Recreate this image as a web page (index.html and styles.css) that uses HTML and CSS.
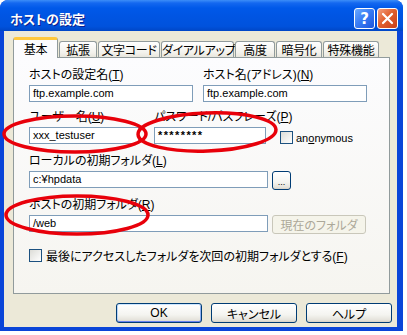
FILE: index.html
```html
<!DOCTYPE html>
<html lang="ja">
<head>
<meta charset="utf-8">
<title>ホストの設定</title>
<link rel="stylesheet" href="styles.css">
</head>
<body>
<div class="window">
  <div class="titlebar">
    <span class="title">ホストの設定</span>
    <div class="tb-buttons">
      <span class="tb-btn help">?</span>
      <span class="tb-btn close"><svg width="13" height="13" viewBox="0 0 13 13"><path d="M2 2 L11 11 M11 2 L2 11" stroke="#fff" stroke-width="2.2" stroke-linecap="round"/></svg></span>
    </div>
  </div>
  <div class="client">
    <div class="tabs">
      <div class="tab active t1">基本</div>
      <div class="tab t2">拡張</div>
      <div class="tab t3">文字コード</div>
      <div class="tab t4">ダイアルアップ</div>
      <div class="tab t5">高度</div>
      <div class="tab t6">暗号化</div>
      <div class="tab t7">特殊機能</div>
    </div>
    <div class="panel">
      <div class="row">
        <div class="field w164">
          <div class="label">ホストの設定名(<u>T</u>)</div>
          <div class="input">ftp.example.com</div>
        </div>
        <div class="field w164">
          <div class="label">ホスト名(アドレス)(<u>N</u>)</div>
          <div class="input">ftp.example.com</div>
        </div>
      </div>
      <div class="row">
        <div class="field w110">
          <div class="label">ユーザー名(<u>U</u>)</div>
          <div class="input">xxx_testuser</div>
        </div>
        <div class="field w112">
          <div class="label">パスワード/パスフレーズ(<u>P</u>)</div>
          <div class="input pw">********</div>
        </div>
        <div class="check-inline">
          <span class="checkbox"></span>
          <span class="latin">an<u>o</u>nymous</span>
        </div>
      </div>
      <div class="row">
        <div class="field">
          <div class="label">ローカルの初期フォルダ(<u>L</u>)</div>
          <div class="input-line">
            <div class="input w239">c:¥hpdata</div>
            <span class="btn small-btn">...</span>
          </div>
        </div>
      </div>
      <div class="row">
        <div class="field">
          <div class="label">ホストの初期フォルダ(<u>R</u>)</div>
          <div class="input-line">
            <div class="input w239">/web</div>
            <span class="btn disabled-btn">現在のフォルダ</span>
          </div>
        </div>
      </div>
      <div class="check-row">
        <span class="checkbox"></span>
        <span>最後にアクセスしたフォルダを次回の初期フォルダとする(<u>F</u>)</span>
      </div>
    </div>
    <div class="buttons">
      <span class="btn dlg-btn default">OK</span>
      <span class="btn dlg-btn">キャンセル</span>
      <span class="btn dlg-btn">ヘルプ</span>
    </div>
  </div>
  <svg class="annot" width="407" height="335" viewBox="0 0 407 335">
    <ellipse cx="75" cy="134" rx="71" ry="18" fill="none" stroke="#E8000A" stroke-width="3.5"/>
    <ellipse cx="207" cy="132" rx="69" ry="19" fill="none" stroke="#E8000A" stroke-width="3.5" transform="rotate(-2 207 132)"/>
    <ellipse cx="77" cy="215" rx="71" ry="19" fill="none" stroke="#E8000A" stroke-width="3.5"/>
  </svg>
</div>
</body>
</html>
```
FILE: styles.css
```css
* { box-sizing: border-box; }
body {
  margin: 0;
  background: #fff;
  font-family: "Liberation Sans", "Noto Sans CJK JP", sans-serif;
  font-size: 12px;
  color: #000;
  font-feature-settings: "palt";
}
u { text-decoration: underline; text-underline-offset: 1px; }

.window {
  position: relative;
  width: 403px;
  height: 331px;
  background: #0A45D8;
  border-radius: 8px 8px 0 0;
  display: flex;
  flex-direction: column;
}
.titlebar {
  height: 31px;
  padding: 6px 5px 0 10px;
  display: flex;
  align-items: center;
  border-radius: 8px 8px 0 0;
  background: linear-gradient(to bottom, #3C8EF8 0, #1468F0 3px, #0059E9 8px, #0055E3 50%, #0052DC 85%, #0046C6 100%);
}
.title {
  flex: 1;
  color: #fff;
  font-weight: bold;
  font-size: 13px;
  text-shadow: 1px 1px #0A1E8C;
  font-family: "Noto Sans CJK JP", sans-serif;
}
.tb-buttons { display: flex; gap: 2px; }
.tb-btn {
  width: 21px;
  height: 21px;
  border: 1px solid #fff;
  border-radius: 3px;
  display: flex;
  align-items: center;
  justify-content: center;
}
.help {
  background: linear-gradient(135deg, #6AAAFF 0%, #3A7DF5 45%, #1C55DC 100%);
  color: #fff;
  font-weight: bold;
  font-size: 15px;
  font-family: "DejaVu Sans", sans-serif;
}
.close {
  background: linear-gradient(135deg, #F3A080 0%, #E2602E 45%, #C8401A 100%);
}

.client {
  flex: 1;
  margin: 0 6px 4px 4px;
  padding: 6px 0 0 9px;
  background: #ECE9D8;
}
.tabs {
  display: flex;
  gap: 1px;
  height: 21px;
  margin-bottom: -1px;
  position: relative;
  z-index: 1;
}
.tab {
  margin-top: 4px;
  height: 16px;
  border: 1px solid #919B9C;
  border-bottom: none;
  border-radius: 3px 3px 0 0;
  background: linear-gradient(#FFFFFF, #F3F2EC 70%, #E8E6DD);
  font-family: "Noto Sans CJK JP", sans-serif;
  font-size: 12px;
  line-height: 15px;
  text-align: center;
  white-space: nowrap;
  letter-spacing: -0.3px;
}
.tab.active {
  margin-top: 0;
  height: 21px;
  background: #FCFCFE;
  border-top: 3px solid #FFC83C;
  line-height: 17px;
}
.t1 { width: 45px; }
.t2 { width: 38px; }
.t3 { width: 62px; }
.t4 { width: 73px; }
.t5 { width: 40px; }
.t6 { width: 46px; }
.t7 { width: 56px; }

.panel {
  width: 377px;
  height: 237px;
  border: 1px solid #919B9C;
  background: linear-gradient(#FCFCFE, #F6F5F0);
  padding: 10px 0 0 15px;
}
.row { display: flex; margin-bottom: 8px; }
.field { display: flex; flex-direction: column; }
.row .field + .field { margin-left: 10px; }
.row .w112 { margin-left: 15px !important; }
.w164 { width: 164px; }
.w110 { width: 110px; }
.w112 { width: 112px; }
.w239 { width: 239px; }
.label {
  height: 14px;
  line-height: 14px;
  margin-bottom: 3px;
  white-space: nowrap;
}
.input {
  height: 17px;
  border: 1px solid #7F9DB9;
  background: #fff;
  padding: 0 3px;
  font-size: 11px;
  line-height: 15px;
  white-space: nowrap;
}
.pw { font-weight: bold; letter-spacing: 1.4px; }
.input-line { display: flex; align-items: flex-start; gap: 4px; }
.check-inline {
  display: flex;
  align-items: center;
  margin-left: 14px;
  margin-top: 19px;
  gap: 3px;
  height: 17px;
}
.latin { font-size: 11px; }
.checkbox {
  width: 13px;
  height: 13px;
  border: 1px solid #1C5180;
  background: linear-gradient(135deg, #DCDCD7, #FFFFFF);
  display: inline-block;
  flex: none;
}
.check-row {
  display: flex;
  align-items: center;
  gap: 4px;
  margin-top: 14px;
  height: 14px;
}

.btn {
  display: flex;
  align-items: center;
  justify-content: center;
  border: 1px solid #003C74;
  border-radius: 3px;
  background: linear-gradient(#FFFFFF, #F4F4F0 60%, #E4E2DA 90%, #D6D0C5);
  white-space: nowrap;
}
.small-btn {
  width: 19px;
  height: 19px;
  font-size: 9px;
  line-height: 9px;
  padding-top: 3px;
}
.disabled-btn {
  width: 94px;
  height: 19px;
  border-color: #C9C7BA;
  background: #F5F4EA;
  color: #ACA899;
}
.buttons {
  display: flex;
  justify-content: flex-end;
  gap: 9px;
  margin-top: 9px;
  padding-right: 5px;
}
.dlg-btn { width: 86px; height: 20px; }
.dlg-btn.default {
  box-shadow: inset 0 1px #CEE7FF, inset 0 -1px #6982EE, inset 1px 0 #B8D4F8, inset -1px 0 #8FB0F0;
}

.annot {
  position: absolute;
  left: 0;
  top: 0;
  pointer-events: none;
}
```
